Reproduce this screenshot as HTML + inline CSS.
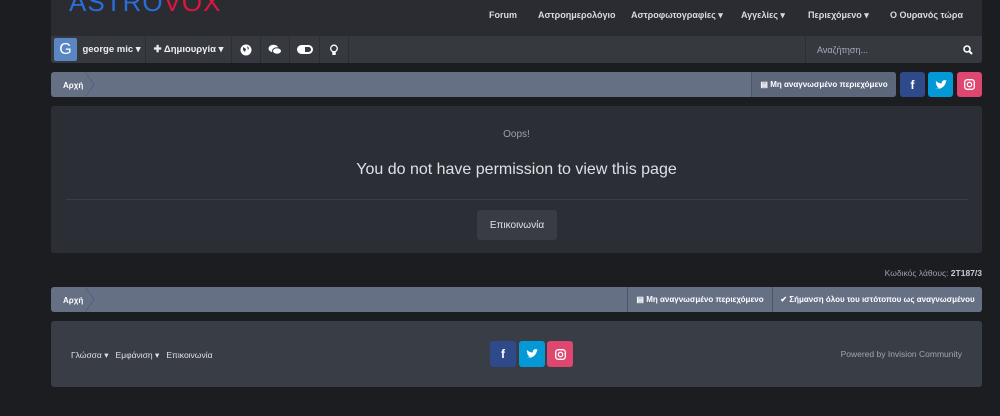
<!DOCTYPE html>
<html><head><meta charset="utf-8"><style>
*{box-sizing:border-box;margin:0;padding:0}
body{width:1000px;height:416px;background:#1c1d21;font-family:"Liberation Sans",sans-serif;color:#fff;position:relative;overflow:hidden}
.abs{position:absolute}
.hdr{left:51px;top:0;width:931px;height:36px;background:#2a2c32}
.logo{left:69px;top:-13px;font-size:26px;font-weight:normal;letter-spacing:1px}
.nav{top:10px;font-size:9px;font-weight:bold;color:#d8dbe2}
.nbar{left:51px;top:36px;width:931px;height:27px;background:#363940;border-radius:0 0 3px 3px}
.cell{top:36px;height:27px;border-right:1px solid #2c2e34;font-size:9.5px;font-weight:bold;display:flex;align-items:center;justify-content:center;color:#eee}
.bc{left:51px;width:931px;height:25px;background:#657085;border-radius:3px}
.bctx{font-size:8px;font-weight:bold;color:#fff}
.sq{width:25px;height:25px;border-radius:3px;display:flex;align-items:center;justify-content:center;font-weight:bold;font-size:12px}
.tri{fill:none;stroke:#55607a;stroke-width:1}
.btn{height:25px;background:#5c677c;border-left:1px solid #4c566a;display:flex;align-items:center;justify-content:center;font-size:8px;font-weight:bold}
</style></head><body>
<div class="abs hdr"></div>
<div class="abs logo"><span style="color:#2a6dd6">ASTRO</span><span style="color:#e0153f">VOX</span></div>
<div class="abs nav" style="left:489px">Forum</div>
<div class="abs nav" style="left:538px">Αστροημερολόγιο</div>
<div class="abs nav" style="left:631px">Αστροφωτογραφίες ▾</div>
<div class="abs nav" style="left:741px">Αγγελίες ▾</div>
<div class="abs nav" style="left:808px">Περιεχόμενο ▾</div>
<div class="abs nav" style="left:890px">Ο Ουρανός τώρα</div>
<div class="abs nbar"></div>
<div class="abs" style="left:54px;top:38px;width:23px;height:23px;background:#5b86c4;border-radius:2px;font-size:16px;text-align:center;line-height:23px">G</div>
<div class="abs cell" style="left:78px;width:68px">george mic ▾</div>
<div class="abs cell" style="left:146px;width:86px">✚ Δημιουργία ▾</div>
<div class="abs cell" style="left:232px;width:29px"><svg width="12" height="12"><circle cx="6" cy="6" r="5.5" fill="#fff"/><path d="M3 3 L6 5 L5 8 L3 6Z M7 2 L9 4 L8 6Z" fill="#363940"/></svg></div>
<div class="abs cell" style="left:261px;width:29px"><svg width="14" height="11"><ellipse cx="5.5" cy="4.5" rx="5" ry="3.8" fill="#fff"/><ellipse cx="9" cy="7" rx="4.5" ry="3.3" fill="#fff" stroke="#363940" stroke-width="1"/></svg></div>
<div class="abs cell" style="left:290px;width:30px"><span style="display:inline-block;width:16px;height:9px;border:2px solid #fff;border-radius:5px;background:linear-gradient(90deg,#fff 50%,transparent 50%)"></span></div>
<div class="abs cell" style="left:320px;width:29px"><svg width="8" height="12"><circle cx="4" cy="4.5" r="3.3" fill="none" stroke="#fff" stroke-width="1.3"/><rect x="2.3" y="8" width="3.4" height="3" fill="#fff"/></svg></div>
<div class="abs" style="left:805px;top:36px;width:177px;height:27px;border-left:1px solid #2c2e34;font-size:9px;color:#aab;display:flex;align-items:center;padding-left:11px">Αναζήτηση...<svg style="position:absolute;right:9px" width="10" height="10"><circle cx="4" cy="4" r="3" fill="none" stroke="#fff" stroke-width="1.6"/><path d="M6 6 L9 9" stroke="#fff" stroke-width="2"/></svg></div>

<div class="abs bc" style="top:72px;width:845px"></div>
<svg class="abs" style="left:85px;top:72px" width="12" height="25"><path d="M0 0 L9 12.5 L0 25" class="tri"/></svg>
<div class="abs bctx" style="left:63px;top:81px">Αρχή</div>
<div class="abs btn" style="left:751px;top:72px;width:145px;border-radius:0 3px 3px 0">▤&nbsp;Μη αναγνωσμένο περιεχόμενο</div>
<div class="abs sq" style="left:900px;top:72px;background:#2e4a8a">f</div>
<div class="abs sq" style="left:928px;top:72px;background:#0399d6"><svg width="12" height="10"><path d="M0 8 Q4 10 8 7 Q11 4 11 1 L12 0 L10.5 0.5 Q9 -0.5 7.5 1 Q6.5 2 6.8 3.5 Q3 3.3 1 1 Q0.3 3 2 4.5 L1 4.3 Q1.3 6 3 6.5 L2 6.6 Q2.7 7.8 4.3 8 Q2.5 9 0 8Z" fill="#fff"/></svg></div>
<div class="abs sq" style="left:957px;top:72px;background:#df4670"><svg width="11" height="11"><rect x="0.7" y="0.7" width="9.6" height="9.6" rx="2.5" fill="none" stroke="#fff" stroke-width="1.3"/><circle cx="5.5" cy="5.5" r="2.2" fill="none" stroke="#fff" stroke-width="1.3"/></svg></div>

<div class="abs" style="left:51px;top:106px;width:931px;height:147px;background:#2c2e35;border-radius:3px"></div>
<div class="abs" style="left:0;width:1033px;top:129px;text-align:center;font-size:10px;color:#9aa0ab">Oops!</div>
<div class="abs" style="left:0;width:1033px;top:161px;text-align:center;font-size:16px;color:#dde0e6">You do not have permission to view this page</div>
<div class="abs" style="left:66px;top:199px;width:902px;height:1px;background:#3a3d45"></div>
<div class="abs" style="left:477px;top:210px;width:80px;height:30px;background:#393c44;border-radius:3px;font-size:10px;color:#e2e4e8;display:flex;align-items:center;justify-content:center">Επικοινωνία</div>

<div class="abs" style="left:800px;top:268px;width:182px;text-align:right;font-size:8.5px;color:#9aa0ab">Κωδικός λάθους: <b style="color:#c8ccd4">2T187/3</b></div>

<div class="abs bc" style="top:287px"></div>
<svg class="abs" style="left:85px;top:287px" width="12" height="25"><path d="M0 0 L9 12.5 L0 25" class="tri"/></svg>
<div class="abs bctx" style="left:63px;top:296px">Αρχή</div>
<div class="abs btn" style="left:627px;top:287px;width:145px;border-left:1px solid #4c566a;background:#657085">▤&nbsp;Μη αναγνωσμένο περιεχόμενο</div>
<div class="abs btn" style="left:772px;top:287px;width:210px;background:#657085;border-radius:0 3px 3px 0">✔&nbsp;Σήμανση όλου του ιστότοπου ως αναγνωσμένου</div>

<div class="abs" style="left:51px;top:321px;width:931px;height:66px;background:#393d46;border-radius:3px"></div>
<div class="abs" style="left:71px;top:350px;font-size:8.5px;color:#e0e2e6">Γλώσσα ▾ &nbsp; Εμφάνιση ▾ &nbsp; Επικοινωνία</div>
<div class="abs sq" style="left:490px;top:341px;width:26px;height:26px;background:#2e4a8a">f</div>
<div class="abs sq" style="left:519px;top:341px;width:26px;height:26px;background:#0399d6"><svg width="12" height="10"><path d="M0 8 Q4 10 8 7 Q11 4 11 1 L12 0 L10.5 0.5 Q9 -0.5 7.5 1 Q6.5 2 6.8 3.5 Q3 3.3 1 1 Q0.3 3 2 4.5 L1 4.3 Q1.3 6 3 6.5 L2 6.6 Q2.7 7.8 4.3 8 Q2.5 9 0 8Z" fill="#fff"/></svg></div>
<div class="abs sq" style="left:547px;top:341px;width:26px;height:26px;background:#df4670"><svg width="11" height="11"><rect x="0.7" y="0.7" width="9.6" height="9.6" rx="2.5" fill="none" stroke="#fff" stroke-width="1.3"/><circle cx="5.5" cy="5.5" r="2.2" fill="none" stroke="#fff" stroke-width="1.3"/></svg></div>
<div class="abs" style="left:780px;top:349px;width:182px;text-align:right;font-size:8.5px;color:#a0a5ae">Powered by Invision Community</div>
</body></html>
